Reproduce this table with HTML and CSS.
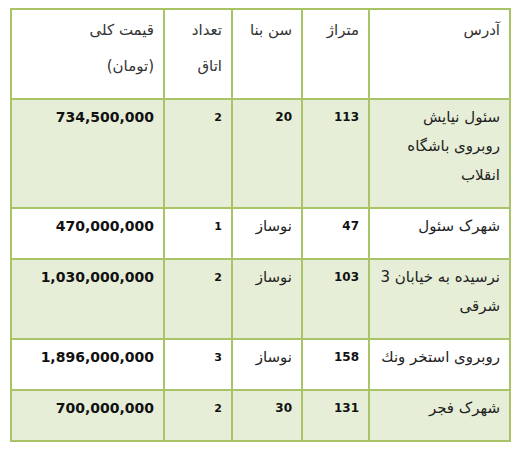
FILE: index.html
```html
<!DOCTYPE html>
<html lang="fa" dir="rtl">
<head>
  <meta charset="UTF-8">
  <title>جدول قیمت</title>
  <link rel="stylesheet" href="styles.css">
</head>
<body>
  <table class="price-table">
    <colgroup>
      <col class="col-address">
      <col class="col-area">
      <col class="col-age">
      <col class="col-rooms">
      <col class="col-price">
    </colgroup>
    <thead>
      <tr>
        <th>آدرس</th>
        <th>متراژ</th>
        <th>سن بنا</th>
        <th>تعداد<br>اتاق</th>
        <th>قیمت کلی<br>(تومان)</th>
      </tr>
    </thead>
    <tbody>
      <tr class="row-alt">
        <td>سئول نیایش<br>روبروی باشگاه<br>انقلاب</td>
        <td class="num">113</td>
        <td class="num">20</td>
        <td class="num small">2</td>
        <td class="price">734,500,000</td>
      </tr>
      <tr>
        <td>شهرک سئول</td>
        <td class="num">47</td>
        <td>نوساز</td>
        <td class="num small">1</td>
        <td class="price">470,000,000</td>
      </tr>
      <tr class="row-alt">
        <td>نرسیده به خیابان 3<br>شرقی</td>
        <td class="num">103</td>
        <td>نوساز</td>
        <td class="num small">2</td>
        <td class="price">1,030,000,000</td>
      </tr>
      <tr>
        <td>روبروی استخر ونك</td>
        <td class="num">158</td>
        <td>نوساز</td>
        <td class="num small">3</td>
        <td class="price">1,896,000,000</td>
      </tr>
      <tr class="row-alt">
        <td>شهرک فجر</td>
        <td class="num">131</td>
        <td class="num">30</td>
        <td class="num small">2</td>
        <td class="price">700,000,000</td>
      </tr>
    </tbody>
  </table>
</body>
</html>
```

FILE: styles.css
```css
body {
  margin: 0;
  padding: 8px 9px 0 12px;
  background-color: #fff;
  font-family: "DejaVu Sans", sans-serif;
  color: #222;
}

.price-table {
  width: 499px;
  table-layout: fixed;
  border-collapse: collapse;
  font-size: 15px;
}

.col-address { width: 141px; }
.col-area { width: 67px; }
.col-age { width: 70px; }
.col-rooms { width: 68px; }
.col-price { width: 153px; }

.price-table th,
.price-table td {
  border: 2px solid #a8c466;
  text-align: right;
  vertical-align: top;
  padding: 3px 9px 17px 4px;
  line-height: 29px;
}

.price-table th {
  font-weight: normal;
  height: 86px;
  padding: 2px 9px 0 4px;
  line-height: 36px;
  color: #333;
}

.row-alt td {
  background-color: #e6eed7;
}

.num,
.price {
  direction: ltr;
  font-weight: bold;
  color: #111;
}

.num {
  font-size: 12px;
}

.small {
  font-size: 11px;
}

.price {
  font-size: 14px;
}
```
